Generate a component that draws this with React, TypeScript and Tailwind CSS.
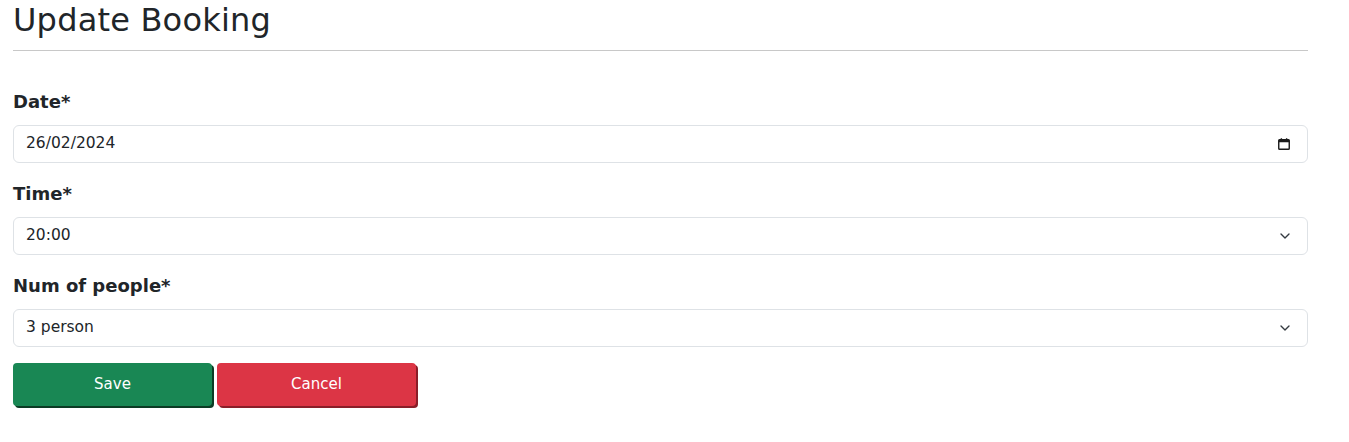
import { ChevronDown } from 'lucide-react';

const font = { fontFamily: '"DejaVu Sans", sans-serif' };

function CalendarIcon() {
  return (
    <svg width="14" height="14" viewBox="0 0 16 16" fill="none">
      <rect x="2" y="3" width="12" height="11" rx="1" stroke="#1a1a1a" strokeWidth="1.6" />
      <rect x="2" y="3" width="12" height="3" fill="#1a1a1a" />
      <path d="M5 1.5v2M11 1.5v2" stroke="#1a1a1a" strokeWidth="1.6" />
    </svg>
  );
}

function SelectField({ label, value }: { label: string; value: string }) {
  return (
    <div className="flex flex-col">
      <label className="text-[18px] font-semibold text-[#212529] leading-[24px] mb-[11px]">{label}</label>
      <div className="flex items-center justify-between h-[38px] border border-[#dee2e6] rounded-[6px] pl-[12px] pr-[14px] text-[15.5px] text-[#212529]">
        <span>{value}</span>
        <ChevronDown size={16} strokeWidth={2} className="text-[#343a40]" />
      </div>
    </div>
  );
}

export default function App() {
  return (
    <div className="bg-white w-[1349px] h-[442px] overflow-hidden" style={font}>
      <div className="w-[1295px] ml-[13px]">
        <h1 className="text-[32px] font-normal text-[#212529] leading-[38px] pt-px tracking-[0.2px]">Update Booking</h1>
        <div className="h-px bg-[#c8c8c8] mt-[11px] mb-[39px]" />

        <div className="flex flex-col gap-[19px]">
          <div className="flex flex-col">
            <label className="text-[18px] font-semibold text-[#212529] leading-[24px] mb-[11px]">Date*</label>
            <div className="flex items-center justify-between h-[38px] border border-[#dee2e6] rounded-[6px] pl-[12px] pr-[16px] text-[15.5px] text-[#212529]">
              <span>26/02/2024</span>
              <CalendarIcon />
            </div>
          </div>
          <SelectField label="Time*" value="20:00" />
          <SelectField label="Num of people*" value="3 person" />
        </div>

        <div className="flex gap-[5px] mt-[16px]">
          <button className="w-[199px] h-[43px] bg-[#198754] text-white text-[15px] font-medium rounded-[4px] shadow-[2px_2px_0_#0b3b24]">
            Save
          </button>
          <button className="w-[199px] h-[43px] bg-[#dc3545] text-white text-[15px] font-medium rounded-[4px] shadow-[2px_2px_0_#8a1e29]">
            Cancel
          </button>
        </div>
      </div>
    </div>
  );
}
